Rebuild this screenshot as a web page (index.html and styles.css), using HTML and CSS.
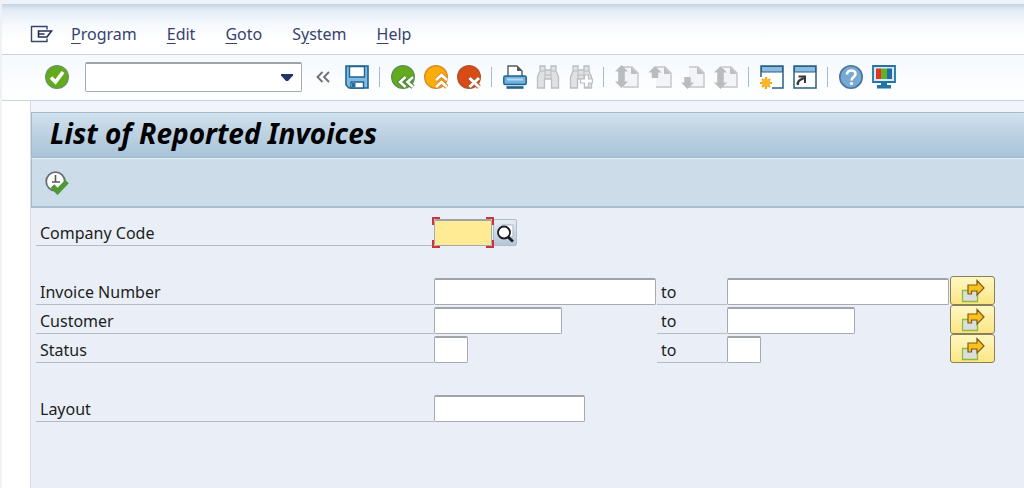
FILE: index.html
```html
<!DOCTYPE html>
<html lang="en">

<head>
  <meta charset="UTF-8">
  <meta name="viewport" content="width=device-width, initial-scale=1.0">
  <title>List of Reported Invoices</title>
  <link rel="stylesheet" href="styles.css">
</head>

<body>

  <!-- shared shapes -->
  <svg class="defs" aria-hidden="true">
    <symbol id="page" viewBox="0 0 24 24">
      <path d="M8 2h9l6 6v14H8" fill="#f3f4f6" stroke="#c3c5c8" stroke-width="1.4"/>
      <path d="M16 2v7h7z" fill="#bcbec1"/>
    </symbol>
    <symbol id="arrow-up" viewBox="0 0 12 11">
      <path d="M6 0l6 6H9v5H3V6H0z" fill="#b9bbbe"/>
    </symbol>
    <symbol id="arrow-down" viewBox="0 0 12 11">
      <path d="M6 11l6-6H9V0H3v5H0z" fill="#b9bbbe"/>
    </symbol>
    <symbol id="binoculars" viewBox="0 0 24 24">
      <path d="M4 1h5v4h6V1h5v5l2.500 6v11h-7v-9h-7v9h-7V12L4 6z" fill="#dfe1e3" stroke="#bcbec1" stroke-width="1.3"/>
      <path d="M4 6h5M15 6h5M9 6v8M15 6v8M9 10h6" fill="none" stroke="#bcbec1" stroke-width="1.1"/>
    </symbol>
    <symbol id="multi" viewBox="0 0 24 24">
      <path d="M1.500 11.500h15v11h-15z" fill="#dcdedb" stroke="#8cbd3c" stroke-width="1.3"/>
      <path d="M7 6h9V1.500l7 7.500-7 7V12h-5.500v3H7z" fill="#fcc21c" stroke="#7d5a24" stroke-width="1.2"/>
    </symbol>
  </svg>

  <nav class="menu-bar">
    <svg class="menu-icon" viewBox="0 0 24 18">
      <path d="M17 4.500V1.500H1.500v15H17v-3" fill="none" stroke="#39446b" stroke-width="1.400"/>
      <path d="M8.500 6h13l-4.500 6H8.500zM8.500 9h6" fill="none" stroke="#252f55" stroke-width="1.600"/>
    </svg>
    <a href="#"><u>P</u>rogram</a>
    <a href="#"><u>E</u>dit</a>
    <a href="#"><u>G</u>oto</a>
    <a href="#">S<u>y</u>stem</a>
    <a href="#"><u>H</u>elp</a>
  </nav>

  <div class="toolbar">
    <button class="tool" aria-label="Enter">
      <svg viewBox="0 0 24 24">
        <circle cx="12" cy="12" r="11.300" fill="#62ac1c" stroke="#6b9560" stroke-width="1.400"/>
        <path d="M6 12.500l4.500 4.500L18 7" fill="none" stroke="#fff" stroke-width="3.600"/>
      </svg>
    </button>
    <div class="command">
      <input type="text" class="field" aria-label="Command">
      <button class="command-toggle" aria-label="Command history">
        <svg viewBox="0 0 12 7"><path d="M0 0h12v1.500L7 7H5L0 1.500z" fill="#26346a"/></svg>
      </button>
    </div>
    <button class="tool" aria-label="Hide command field">
      <svg viewBox="0 0 24 24"><path d="M10.500 7l-5 5 5 5M17 7l-5 5 5 5" fill="none" stroke="#6d6f73" stroke-width="1.800"/></svg>
    </button>
    <button class="tool" aria-label="Save">
      <svg viewBox="0 0 24 24">
        <path d="M1 1h22v22H4l-3-3z" fill="#7fbbe4" stroke="#1f6490" stroke-width="1.600"/>
        <path d="M4.500 1.500h15V12h-15z" fill="#fff" stroke="#1f6490" stroke-width="1.400"/>
        <path d="M6 17h12.500v6H6z" fill="#fff" stroke="#1f6490" stroke-width="1.400"/>
        <path d="M7 18h3.500v4.500H7z" fill="#2b6b95"/>
      </svg>
    </button>
    <span class="sep"></span>
    <button class="tool" aria-label="Back">
      <svg viewBox="0 0 24 24">
        <circle cx="12" cy="12" r="11.300" fill="#62ac1c" stroke="#5d8f55" stroke-width="1.400"/>
        <path d="M14.500 12L9 17l5.500 5M22 12l-5.500 5 5.500 5" fill="none" stroke="#4c8338" stroke-width="4.500"/>
        <path d="M14.500 12L9 17l5.500 5M22 12l-5.500 5 5.500 5" fill="none" stroke="#fff" stroke-width="2.600"/>
      </svg>
    </button>
    <button class="tool" aria-label="Exit">
      <svg viewBox="0 0 24 24">
        <circle cx="12" cy="12" r="11.300" fill="#fbae0a" stroke="#d98a28" stroke-width="1.400"/>
        <path d="M12 15l5.500-5 5.500 5M12 22l5.500-5 5.500 5" fill="none" stroke="#d98a28" stroke-width="4.500"/>
        <path d="M12 15l5.500-5 5.500 5M12 22l5.500-5 5.500 5" fill="none" stroke="#fff" stroke-width="2.600"/>
      </svg>
    </button>
    <button class="tool" aria-label="Cancel">
      <svg viewBox="0 0 24 24">
        <circle cx="12" cy="12" r="11.300" fill="#d94b14" stroke="#b2532d" stroke-width="1.400"/>
        <path d="M12.500 13l9.500 9M22 13l-9.500 9" stroke="#b2532d" stroke-width="5"/>
        <path d="M12.500 13l9.500 9M22 13l-9.500 9" stroke="#fff" stroke-width="3"/>
      </svg>
    </button>
    <span class="sep"></span>
    <button class="tool" aria-label="Print">
      <svg viewBox="0 0 24 24">
        <path d="M5 12V1h9l5 5v6" fill="#fff" stroke="#55585c" stroke-width="1.400"/>
        <path d="M14 1v5h5z" fill="#55585c"/>
        <rect x=".8" y="11" width="22.400" height="8.500" rx="1.500" fill="#6fb0dc" stroke="#1f6490" stroke-width="1.500"/>
        <path d="M4 14.500h16" stroke="#b9dcf2" stroke-width="2"/>
        <path d="M3.500 22.500h17" stroke="#1f5f8d" stroke-width="2.600"/>
      </svg>
    </button>
    <button class="tool" aria-label="Find"><svg viewBox="0 0 24 24"><use href="#binoculars"/></svg></button>
    <button class="tool" aria-label="Find next">
      <svg viewBox="0 0 24 24">
        <use href="#binoculars"/>
        <path d="M15.500 10h4v4h4v4h-4v4h-4v-4h-4v-4h4z" fill="#fff" stroke="#bcbec1" stroke-width="1.200"/>
      </svg>
    </button>
    <span class="sep"></span>
    <button class="tool" aria-label="First page">
      <svg viewBox="0 0 24 24">
        <use href="#page"/>
        <use href="#arrow-up" x="0" y="0" width="13" height="12"/>
        <use href="#arrow-down" x="0" y="11" width="13" height="12"/>
      </svg>
    </button>
    <button class="tool" aria-label="Previous page">
      <svg viewBox="0 0 24 24">
        <use href="#page"/>
        <use href="#arrow-up" x="0" y="1" width="14" height="12"/>
      </svg>
    </button>
    <button class="tool" aria-label="Next page">
      <svg viewBox="0 0 24 24">
        <use href="#page"/>
        <use href="#arrow-down" x="0" y="12" width="13" height="12"/>
      </svg>
    </button>
    <button class="tool" aria-label="Last page">
      <svg viewBox="0 0 24 24">
        <use href="#page"/>
        <use href="#arrow-up" x="0" y="1" width="13" height="12"/>
        <use href="#arrow-down" x="0" y="12" width="13" height="12"/>
      </svg>
    </button>
    <span class="sep"></span>
    <button class="tool" aria-label="New session">
      <svg viewBox="0 0 24 24">
        <path d="M1 1h22v22H1z" fill="#fff" stroke="#285f85" stroke-width="1.500"/>
        <path d="M1.500 1.500h21V7h-21z" fill="#8bbce2" stroke="#285f85" stroke-width="1"/>
        <path d="M0 12h12v12H0z" fill="#fff"/>
        <path d="M6 12v12M0 18h12M2 14l8 8M10 14l-8 8" stroke="#f2a71d" stroke-width="2.200"/>
        <circle cx="6" cy="18" r="4" fill="#fbb62a"/>
      </svg>
    </button>
    <button class="tool" aria-label="Create shortcut">
      <svg viewBox="0 0 24 24">
        <path d="M1 1h22v22H1z" fill="#fff" stroke="#285f85" stroke-width="1.500"/>
        <path d="M1.500 1.500h21V7h-21z" fill="#8bbce2" stroke="#285f85" stroke-width="1"/>
        <path d="M5 20c-1-4 2-5 6-7" fill="none" stroke="#34373b" stroke-width="2.400"/>
        <path d="M5.500 11.500H12V18" fill="none" stroke="#34373b" stroke-width="2"/>
      </svg>
    </button>
    <span class="sep"></span>
    <button class="tool" aria-label="Help">
      <svg viewBox="0 0 24 24">
        <circle cx="12" cy="12" r="11.200" fill="#79a9d2" stroke="#47779e" stroke-width="1.600"/>
        <path d="M8 9.500C8 4 16.500 4.500 16.500 9c0 3-4 3-4 6.500" fill="none" stroke="#fff" stroke-width="2.600"/>
        <circle cx="12.500" cy="18.500" r="1.600" fill="#fff"/>
      </svg>
    </button>
    <button class="tool" aria-label="Customize local layout">
      <svg viewBox="0 0 24 24">
        <path d="M1 1h22v16H1z" fill="#d5e9f7" stroke="#2374a3" stroke-width="1.800"/>
        <path d="M4 3.500h5v10.500H4z" fill="#e3341f"/>
        <path d="M9 3.500h6v10.500H9z" fill="#5eb226"/>
        <path d="M15 3.500h5v10.500h-5z" fill="#2468b0"/>
        <path d="M9 17h6v3h4v3.500H5V20h4z" fill="#2374a3"/>
      </svg>
    </button>
  </div>

  <main class="screen">
    <header class="title-bar">
      <h1>List of Reported Invoices</h1>
    </header>

    <div class="app-toolbar">
      <button class="tool" aria-label="Execute">
        <svg viewBox="0 0 24 24">
          <circle cx="10.500" cy="10.500" r="9.300" fill="#fff" stroke="#6a6f73" stroke-width="1.800"/>
          <path d="M10.500 4v7H15M7 11h4" fill="none" stroke="#55595d" stroke-width="1.600"/>
          <path d="M7.500 15l5 5.500L22 10.500" fill="none" stroke="#4d9a33" stroke-width="5"/>
        </svg>
      </button>
    </div>

    <form class="selection">
      <div class="row">
        <label for="company">Company Code</label>
        <div class="cell">
          <span class="focus-box"><input type="text" id="company" class="field required"></span>
          <button type="button" class="search-help" aria-label="Search company code">
            <svg viewBox="0 0 20 20">
              <path d="M7 2h11v12H7z" fill="#fff" stroke="#a9b3bf"/>
              <circle cx="9" cy="9.500" r="6" fill="#fff" stroke="#1b1d20" stroke-width="1.800"/>
              <path d="M13 14l5 4.500" stroke="#1b1d20" stroke-width="2.800"/>
            </svg>
          </button>
        </div>
      </div>

      <div class="row group">
        <label for="invoice-from">Invoice Number</label>
        <div class="cell"><input type="text" id="invoice-from" class="field size-l"></div>
        <label for="invoice-to">to</label>
        <div class="cell"><input type="text" id="invoice-to" class="field size-l"></div>
        <button type="button" class="multi-select" aria-label="Multiple selection for invoice number"><svg viewBox="0 0 24 24"><use href="#multi"/></svg></button>
      </div>
      <div class="row">
        <label for="customer-from">Customer</label>
        <div class="cell"><input type="text" id="customer-from" class="field size-m"></div>
        <label for="customer-to">to</label>
        <div class="cell"><input type="text" id="customer-to" class="field size-m"></div>
        <button type="button" class="multi-select" aria-label="Multiple selection for customer"><svg viewBox="0 0 24 24"><use href="#multi"/></svg></button>
      </div>
      <div class="row">
        <label for="status-from">Status</label>
        <div class="cell"><input type="text" id="status-from" class="field size-s"></div>
        <label for="status-to">to</label>
        <div class="cell"><input type="text" id="status-to" class="field size-s"></div>
        <button type="button" class="multi-select" aria-label="Multiple selection for status"><svg viewBox="0 0 24 24"><use href="#multi"/></svg></button>
      </div>

      <div class="row group">
        <label for="layout">Layout</label>
        <div class="cell"><input type="text" id="layout" class="field size-layout"></div>
      </div>
    </form>
  </main>

</body>

</html>
```

FILE: styles.css
```css
* {
  box-sizing: border-box;
}

body {
  margin: 0;
  min-height: 100vh;
  display: flex;
  flex-direction: column;
  border-left: 2px solid #eef1f5;
  font-family: "Noto Sans", Tahoma, sans-serif;
  font-size: 16px;
  color: #1c1e22;
  background-color: #fff;
}

button {
  padding: 0;
  border: none;
  background: none;
  cursor: pointer;
}

svg {
  display: block;
}

.defs {
  position: absolute;
  width: 0;
  height: 0;
}

.menu-bar {
  display: flex;
  align-items: center;
  gap: 30px;
  height: 55px;
  padding: 9px 28px 0;
  border-top: 4px solid #eef3f9;
  border-bottom: 1px solid #ccd3da;
  background: linear-gradient(#c3d3e6, #e3ebf5 6px, #f6f9fd 20px, #fff 36px);
}

.menu-bar a {
  color: #36426e;
  text-decoration: none;
}

.menu-bar u {
  text-underline-offset: 3px;
}

.menu-icon {
  width: 24px;
  height: 18px;
  margin-right: -13px;
}

.toolbar {
  display: flex;
  align-items: center;
  height: 46px;
  padding: 0 0 1px 38px;
  border-bottom: 1px solid #ccd6e2;
  background: linear-gradient(#f5f9fd, #fff);
}

.tool {
  display: flex;
  justify-content: center;
  width: 33px;
}

.tool svg {
  width: 24px;
  height: 24px;
}

.sep {
  width: 1px;
  height: 20px;
  margin: 0 6px;
  background-color: #a4bdd2;
}

.field {
  height: 27px;
  padding: 0 5px;
  border: 1px solid #a6abb1;
  border-top: 2px solid #a0a4a9;
  border-radius: 2px;
  background-color: #fff;
  font: inherit;
  outline: none;
}

.command {
  display: flex;
  position: relative;
  width: 217px;
  margin: 0 5px 0 12px;
}

.command .field {
  width: 100%;
  height: 30px;
}

.command-toggle {
  position: absolute;
  top: 1px;
  right: 1px;
  display: flex;
  align-items: center;
  justify-content: center;
  width: 28px;
  height: 28px;
}

.command-toggle svg {
  width: 12px;
  height: 7px;
}

.screen {
  flex: 1;
  margin-left: 28px;
  padding-top: 11px;
  border-left: 1px solid #d5dce6;
  background: linear-gradient(#f1f5fb, #f1f5fb 11px, #eaeff7 11px);
}

.title-bar {
  display: flex;
  align-items: center;
  height: 46px;
  padding: 0 18px 4px;
  border: 1px solid #a4b9c9;
  border-right: none;
  background: linear-gradient(#d2e1ed, #c0d4e4 40%, #a8c3d9);
}

.title-bar h1 {
  margin: 0;
  font-size: 28px;
  font-style: italic;
  font-weight: bold;
  line-height: 34px;
  color: #000;
}

.app-toolbar {
  display: flex;
  align-items: center;
  height: 50px;
  padding-left: 8px;
  border-top: 1px solid #e3edf4;
  border-bottom: 2px solid #a9bfd1;
  border-left: 1px solid #a4b9c9;
  background-color: #ccdce9;
}

.selection {
  padding: 9px 29px 20px 5px;
}

.row {
  display: grid;
  grid-template-columns: 1fr 223px 70px 223px 45px;
  height: 29px;
}

.row.group {
  margin-top: 30px;
}

.row label {
  padding: 4px 0 0 4px;
  border-bottom: 1px solid #b4bcc7;
  line-height: 24px;
}

.cell {
  display: flex;
  align-items: flex-end;
}

/* red corner marks around the focused field */
.focus-box {
  display: flex;
  margin: 0 -2px -2px;
  padding: 2px;
  background:
    linear-gradient(#c8343f, #c8343f) 0 0 / 8px 2px,
    linear-gradient(#c8343f, #c8343f) 0 0 / 2px 8px,
    linear-gradient(#c8343f, #c8343f) 100% 0 / 8px 2px,
    linear-gradient(#c8343f, #c8343f) 100% 0 / 2px 8px,
    linear-gradient(#c8343f, #c8343f) 0 100% / 8px 2px,
    linear-gradient(#c8343f, #c8343f) 0 100% / 2px 8px,
    linear-gradient(#c8343f, #c8343f) 100% 100% / 8px 2px,
    linear-gradient(#c8343f, #c8343f) 100% 100% / 2px 8px;
  background-repeat: no-repeat;
}

.required {
  width: 58px;
  background-color: #ffeb94;
}

.search-help {
  display: flex;
  align-items: center;
  justify-content: center;
  width: 24px;
  height: 27px;
  margin-left: 1px;
  border: 1px solid #b0bccb;
  border-radius: 2px;
  background: linear-gradient(#e6edf4, #b5c5d7);
}

.focus-box {
  position: relative;
}

.search-help svg {
  width: 20px;
  height: 20px;
}

.size-l {
  width: 222px;
}

.size-m {
  width: 128px;
}

.size-s {
  width: 34px;
}

.size-layout {
  width: 151px;
}

.multi-select {
  display: flex;
  align-items: center;
  justify-content: center;
  height: 29px;
  border: 1px solid #8a8058;
  border-radius: 3px;
  background: linear-gradient(#fff8c4, #fbe583);
}

.multi-select svg {
  width: 24px;
  height: 24px;
}
```
